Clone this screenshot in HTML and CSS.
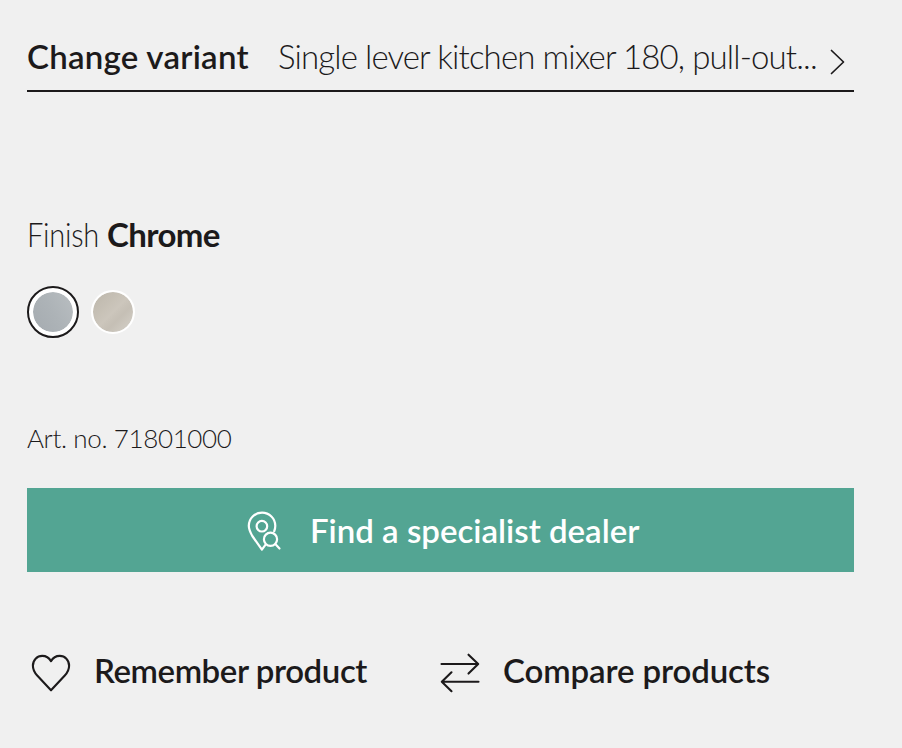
FILE: index.html
```html
<!DOCTYPE html>
<html lang="en">
<head>
<meta charset="utf-8">
<title>Product options</title>
<link rel="stylesheet" href="styles.css">
</head>
<body>
<main class="product">
  <div class="variant">
    <span class="variant-label">Change variant</span>
    <span class="variant-value">Single lever kitchen mixer 180, pull-out...</span>
    <svg class="chevron" width="16" height="26" viewBox="0 0 16 26"><path d="M1.5 1.5 13.5 13 1.5 24.5"/></svg>
  </div>
  <div class="finish"><span class="finish-label">Finish</span><span class="finish-value">Chrome</span></div>
  <div class="swatches">
    <span class="ring"><span class="swatch chrome"></span></span>
    <span class="swatch steel"></span>
  </div>
  <div class="article">Art. no. 71801000</div>
  <div class="dealer">
    <svg class="pin" width="36" height="42" viewBox="0 0 36 42"><path d="M28.2 20.2C29 18.3 29.3 16.6 29.3 14.8A13.2 13.2 0 0 0 2.8 14.8C2.8 18.5 4.4 21.6 6.3 25L15.9 38.6 19.6 33.7"/><circle cx="15.9" cy="15.2" r="5.3"/><circle cx="24.5" cy="28.3" r="6.6"/><path d="M29.3 33 33.5 37.5"/></svg>
    <span class="dealer-text">Find a specialist dealer</span>
  </div>
  <div class="actions">
    <div class="action remember">
      <svg width="42" height="40" viewBox="0 0 42 40"><path d="M21 37.3 7.2 22.5C4.3 19.3 2.9 16.3 2.9 12.7 2.9 7 7 2.9 12.2 2.9 16 2.9 19 4.6 21 8.2 23 4.6 26 2.9 29.8 2.9 35 2.9 39.1 7 39.1 12.7 39.1 16.3 37.7 19.3 34.8 22.5Z"/></svg>
      <span class="remember-text">Remember product</span>
    </div>
    <div class="action compare">
      <svg width="42" height="40" viewBox="0 0 42 40"><path d="M2.5 11H39M29.5 1.7 39.2 11 29.5 20.6M39.5 28.7H3M12.5 19.3 2.8 28.7 12.5 38.2"/></svg>
      <span class="compare-text">Compare products</span>
    </div>
  </div>
</main>
</body>
</html>
```
FILE: styles.css
```css
body {
  margin: 0;
  background: #f0f0f0;
  color: #1c1a1b;
  font-family: Lato, "Liberation Sans", sans-serif;
  font-size: 33px;
  line-height: 40px;
  white-space: nowrap;
}
svg {
  display: block;
  flex: none;
  fill: none;
  stroke: currentColor;
  stroke-width: 2.1;
  stroke-linecap: round;
  stroke-linejoin: round;
}
.product { width: 827px; padding: 36px 0 0 27px; }
.variant {
  display: flex;
  height: 54px;
  border-bottom: 2px solid #1c1a1b;
}
.variant-label { width: 251px; font-weight: 600; letter-spacing: .25px; }
.variant-value { width: 552px; font-weight: 300; letter-spacing: -.88px; }
.chevron { margin-top: 13px; stroke-width: 1.7; }
.finish { display: flex; margin-top: 122px; }
.finish-label {
  width: 80px;
  font-weight: 300;
  letter-spacing: -.3px;
  transform: scaleX(.88);
  transform-origin: 0 50%;
}
.finish-value { font-weight: 700; letter-spacing: -.6px; }
.swatches { display: flex; align-items: center; gap: 12px; margin-top: 32px; }
.ring {
  box-sizing: border-box;
  width: 52px;
  height: 52px;
  padding: 2px;
  border: 2px solid #1c1a1b;
  border-radius: 50%;
  background: #fff;
}
.swatch {
  display: block;
  box-sizing: border-box;
  width: 44px;
  height: 44px;
  border: 2px solid #fff;
  border-radius: 50%;
}
.chrome { background: linear-gradient(60deg, #a5abb0, #adb3b7 50%, #b9bec1) padding-box; }
.steel { background: linear-gradient(135deg, #bcb6aa, #ccc6bc 50%, #c5bfb5 65%, #d6d2ca) padding-box; }
.article { margin-top: 80px; font-size: 26px; font-weight: 300; letter-spacing: -.37px; }
.dealer {
  display: flex;
  align-items: center;
  height: 84px;
  margin-top: 30px;
  background: #53a593;
  color: #fff;
  font-weight: 600;
}
.pin { margin: 3px 0 0 219px; stroke-width: 2.2; }
.dealer-text { margin-left: 28px; }
.actions { display: grid; grid-template-columns: 409px 1fr; margin-top: 78px; font-weight: 600; }
.action { display: flex; gap: 22px; padding-left: 3px; }
.action svg { margin-top: 3px; }
.compare svg { stroke-width: 2.1; }
.remember-text { letter-spacing: -.42px; }
.compare-text { letter-spacing: -.12px; }
```
